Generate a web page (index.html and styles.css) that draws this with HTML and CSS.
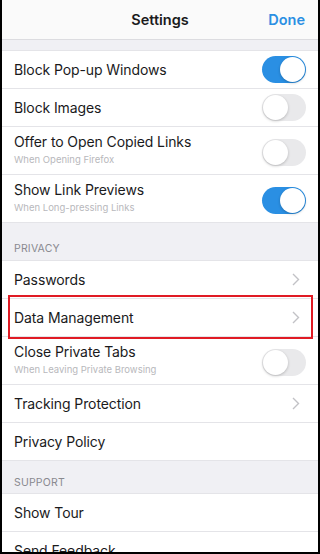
FILE: index.html
```html
<!DOCTYPE html>
<html lang="en">
<head>
    <title>Settings</title>
    <link rel="stylesheet" href="styles.css">
</head>
<body>
<div class="frame">
    <header class="nav-bar">
        <span class="nav-title">Settings</span>
        <span class="nav-done">Done</span>
    </header>

    <div class="spacer"></div>

    <div class="group">
        <div class="row">
            <span class="row-label">Block Pop-up Windows</span>
            <span class="toggle on"></span>
        </div>
        <div class="row">
            <span class="row-label">Block Images</span>
            <span class="toggle"></span>
        </div>
        <div class="row tall">
            <div class="row-text">
                <span class="row-label">Offer to Open Copied Links</span>
                <span class="row-sub">When Opening Firefox</span>
            </div>
            <span class="toggle"></span>
        </div>
        <div class="row tall">
            <div class="row-text">
                <span class="row-label">Show Link Previews</span>
                <span class="row-sub">When Long-pressing Links</span>
            </div>
            <span class="toggle on"></span>
        </div>
    </div>

    <div class="section-header">PRIVACY</div>

    <div class="group">
        <div class="row">
            <span class="row-label">Passwords</span>
            <svg class="chevron" viewBox="0 0 8 13" fill="none"><path d="M1 1l5.5 5.5L1 12"/></svg>
        </div>
        <div class="row highlighted">
            <span class="row-label">Data Management</span>
            <svg class="chevron" viewBox="0 0 8 13" fill="none"><path d="M1 1l5.5 5.5L1 12"/></svg>
        </div>
        <div class="row tall">
            <div class="row-text">
                <span class="row-label">Close Private Tabs</span>
                <span class="row-sub">When Leaving Private Browsing</span>
            </div>
            <span class="toggle"></span>
        </div>
        <div class="row">
            <span class="row-label">Tracking Protection</span>
            <svg class="chevron" viewBox="0 0 8 13" fill="none"><path d="M1 1l5.5 5.5L1 12"/></svg>
        </div>
        <div class="row">
            <span class="row-label">Privacy Policy</span>
        </div>
    </div>

    <div class="section-header short">SUPPORT</div>

    <div class="group">
        <div class="row">
            <span class="row-label">Show Tour</span>
        </div>
        <div class="row">
            <span class="row-label">Send Feedback</span>
        </div>
    </div>
</div>
</body>
</html>
```

FILE: styles.css
```css
:root {
    --bg-group: #f0f0f4;
    --bg-row: #ffffff;
    --line: #e4e4e8;
    --text: #1a1a1c;
    --text-sub: #b8b8bc;
    --text-section: #8a8a90;
    --blue: #2a8fe3;
    --chevron: #c2c2c6;
    --mark: #e01b24;
}

* {
    margin: 0;
    padding: 0;
    box-sizing: border-box;
}

body {
    font-family: Inter, "Liberation Sans", sans-serif;
    background: #000;
    color: var(--text);
    height: 554px;
    overflow: hidden;
}

.frame {
    width: 320px;
    height: 554px;
    border: 2px solid #000;
    border-top: none;
    background: var(--bg-group);
    overflow: hidden;
}

.nav-bar {
    position: relative;
    display: flex;
    align-items: center;
    justify-content: center;
    height: 40px;
    background: #fafafa;
    border-bottom: 1px solid #dcdce0;
}

.nav-title {
    font-size: 14.5px;
    font-weight: 600;
}

.nav-done {
    position: absolute;
    right: 13px;
    top: 11px;
    font-size: 14.5px;
    font-weight: 600;
    color: var(--blue);
}

.spacer {
    height: 10px;
}

.group {
    background: var(--bg-row);
    border-top: 1px solid var(--line);
}

.row {
    display: flex;
    align-items: center;
    justify-content: space-between;
    height: 38px;
    padding: 0 12px;
    border-bottom: 1px solid var(--line);
}

.row.tall {
    height: 48px;
    align-items: flex-start;
    padding-top: 6px;
}

.row.tall .toggle {
    margin-top: 6px;
}

.row-text {
    display: flex;
    flex-direction: column;
}

.row-label {
    font-size: 14px;
    line-height: 18px;
    letter-spacing: -0.1px;
}

.row-sub {
    font-size: 9.5px;
    line-height: 17px;
    color: var(--text-sub);
}

.toggle {
    position: relative;
    width: 44px;
    height: 27px;
    border-radius: 14px;
    background: #e9e9eb;
}

.toggle::after {
    content: "";
    position: absolute;
    left: 1px;
    top: 1px;
    width: 25px;
    height: 25px;
    border-radius: 50%;
    background: #fff;
    box-shadow: 0 1px 3px rgba(0, 0, 0, 0.22);
}

.toggle.on {
    background: var(--blue);
}

.toggle.on::after {
    left: 18px;
}

.chevron {
    width: 8px;
    height: 13px;
    margin-right: 6px;
    stroke: var(--chevron);
    stroke-width: 1.4;
}

.highlighted {
    position: relative;
}

.highlighted::before {
    content: "";
    position: absolute;
    left: 6px;
    right: 5px;
    top: -4px;
    bottom: -3px;
    border: 2px solid var(--mark);
}

.section-header {
    height: 37px;
    padding: 19px 12px 0;
    font-size: 10.5px;
    color: var(--text-section);
    letter-spacing: 0.2px;
}

.section-header.short {
    height: 32px;
    padding-top: 15px;
}
```
